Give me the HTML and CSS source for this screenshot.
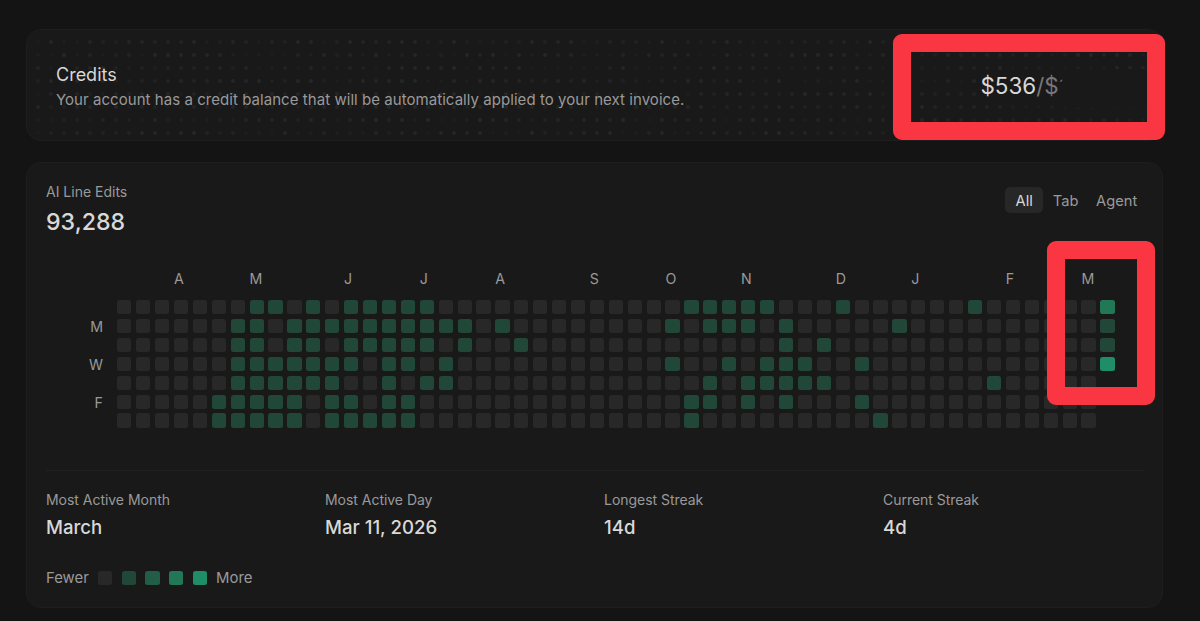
FILE: index.html
```html
<!DOCTYPE html>
<html lang="en">
<head>
  <meta charset="UTF-8">
  <title>Usage</title>
  <link rel="stylesheet" href="styles.css">
</head>
<body>
  <main class="page">

    <!-- Credits -->
    <section class="card credits">
      <div class="dots" id="dots"></div>
      <div class="credits-text">
        <h2>Credits</h2>
        <p>Your account has a credit balance that will be automatically applied to your next invoice.</p>
      </div>
      <div class="balance-cover"></div>
      <div class="balance">$536<span class="total">/$<span class="tick">´</span></span></div>
      <div class="marker marker-credits"></div>
    </section>

    <!-- Activity -->
    <section class="card activity">
      <header class="activity-header">
        <div>
          <div class="label">AI Line Edits</div>
          <div class="count">93,288</div>
        </div>
        <nav class="tabs">
          <button class="tab active">All</button>
          <button class="tab">Tab</button>
          <button class="tab">Agent</button>
        </nav>
      </header>

      <div class="months" id="months"></div>
      <div class="graph">
        <div class="days">
          <span></span><span>M</span><span></span><span>W</span><span></span><span>F</span><span></span>
        </div>
        <div class="cells" id="cells"></div>
      </div>

      <div class="stats">
        <div class="stat"><div class="label">Most Active Month</div><div class="value">March</div></div>
        <div class="stat"><div class="label">Most Active Day</div><div class="value">Mar 11, 2026</div></div>
        <div class="stat"><div class="label">Longest Streak</div><div class="value">14d</div></div>
        <div class="stat"><div class="label">Current Streak</div><div class="value">4d</div></div>
      </div>

      <div class="legend">
        <span class="fewer">Fewer</span>
        <i class="cell"></i>
        <i class="cell l1"></i>
        <i class="cell l2"></i>
        <i class="cell l3"></i>
        <i class="cell l4"></i>
        <span class="more">More</span>
      </div>
      <div class="marker marker-streak"></div>
    </section>
  </main>

  <script>
    // one string per weekday, one digit per week; a space means no day yet
    const rows = [
      '00000001101011111000000000000011111000100000010000003',
      '00000011011111111110100000000101110100000100000000001',
      '00000011011011111010010000000000000101000000000000001',
      '00000011111110110100000000000100101110010000000000004',
      '0000001111110010110000000000000101111100000000100000 ',
      '0000011111011011000000000000001101010001000000000000 ',
      '0000011111011111000000000000001000000000100000000000 '
    ];
    const months = { 3: 'A', 7: 'M', 12: 'J', 16: 'J', 20: 'A', 25: 'S', 29: 'O', 33: 'N', 38: 'D', 42: 'J', 47: 'F', 51: 'M' };

    const cells = document.getElementById('cells');
    rows.forEach(row => {
      for (const level of row) {
        const cell = document.createElement('i');
        cell.className = level === ' ' ? 'cell none' : 'cell l' + level;
        cells.appendChild(cell);
      }
    });

    const monthRow = document.getElementById('months');
    for (let week = 0; week < 53; week++) {
      const span = document.createElement('span');
      span.textContent = months[week] || '';
      monthRow.appendChild(span);
    }

    // dotted texture, fixed seed so it always looks the same
    const dots = document.getElementById('dots');
    let seed = 7;
    for (let i = 0; i < 86 * 8; i++) {
      seed = (seed * 16807) % 2147483647;
      const dot = document.createElement('i');
      dot.style.opacity = (0.2 + 0.7 * seed / 2147483647).toFixed(2);
      dots.appendChild(dot);
    }
  </script>
</body>
</html>
```
FILE: styles.css
```css
* { box-sizing: border-box; }

body {
  margin: 0;
  height: 621px;
  overflow: hidden;
  background: #141414;
  color: #d8d8d8;
  font-family: 'Inter', sans-serif;
}

.page {
  display: flex;
  flex-direction: column;
  gap: 21px;
  width: 1137px;
  margin: 29px 0 0 26px;
}

.card {
  position: relative;
  background: #191919;
  border: 1px solid #1e1e1e;
  border-radius: 15px;
}

/* Credits */
.credits {
  display: flex;
  height: 112px;
  padding: 33px 29px 0;
}

.dots {
  position: absolute;
  top: 5.5px;
  left: 4.5px;
  display: grid;
  grid-template-columns: repeat(86, 13px);
  grid-auto-rows: 13px;
  place-items: center;
}

.dots i {
  width: 4px;
  height: 4px;
  border-radius: 50%;
  background: #292929;
}

.credits-text {
  position: relative;
  width: 924.5px;
}

.credits h2 {
  margin: 0;
  font-size: 18px;
  line-height: 23px;
  font-weight: 400;
}

.credits p {
  margin: 4px 0 0;
  font-size: 15px;
  line-height: 20px;
  letter-spacing: 0.05px;
  color: #999;
}

.balance {
  position: relative;
  height: 30px;
  margin-top: 8px;
  background: #191919;
  font-size: 22.4px;
  line-height: 30px;
}

.total { color: #777; }
.tick {
  font-size: 15px;
  vertical-align: 3px;
  line-height: 1;
}

.balance-cover {
  position: absolute;
  left: 1036px;
  top: 39px;
  width: 84px;
  height: 39px;
  background: #191919;
}

/* Red highlight frames drawn over the cards */
.marker {
  position: absolute;
  border: 18px solid #fa3643;
  border-radius: 9px;
}

.marker-credits {
  left: 866px;
  top: 4px;
  width: 272px;
  height: 106px;
}

.marker-streak {
  left: 1020px;
  top: 78px;
  width: 108px;
  height: 164px;
}

/* Activity */
.activity {
  height: 446px;
  padding: 19px 17px 0 19px;
}

.activity-header {
  display: flex;
  justify-content: space-between;
  height: 86px;
}

.label {
  font-size: 14px;
  line-height: 20px;
  color: #999;
}

.count {
  margin-top: 5px;
  font-size: 23.2px;
  line-height: 30px;
  font-weight: 450;
}

.tabs {
  display: flex;
  align-items: flex-start;
  gap: 2px;
  padding-top: 5px;
}

.tab {
  height: 26px;
  padding: 1px 7.8px 0;
  border: none;
  border-radius: 5px;
  background: none;
  color: #999;
  font: 14.7px 'Inter', sans-serif;
}

.tab.active {
  padding: 1px 10.2px 0;
  background: #272727;
  color: #d8d8d8;
}

.months,
.cells {
  display: grid;
  grid-template-columns: repeat(53, 14.2px);
  column-gap: 4.73px;
}

.months {
  margin-left: 71.2px;
  height: 32px;
  font-size: 14.2px;
  line-height: 22px;
  color: #999;
}

.graph {
  display: flex;
  height: 170px;
}

.days {
  display: grid;
  grid-auto-rows: 14.2px;
  row-gap: 4.73px;
  width: 57px;
  margin-right: 14.2px;
  text-align: right;
  font-size: 14.2px;
  line-height: 15px;
  color: #999;
}

.cells {
  grid-auto-rows: 14.2px;
  row-gap: 4.73px;
}

.cell {
  width: 14.2px;
  height: 14.2px;
  border-radius: 2.5px;
  background: #282828;
}

.cell.l1 { background: #214738; }
.cell.l2 { background: #215d47; }
.cell.l3 { background: #227757; }
.cell.l4 { background: #1f8d67; }
.cell.none { visibility: hidden; }

.stats {
  display: grid;
  grid-template-columns: repeat(4, 279px);
  width: 1098px;
  padding-top: 19px;
  border-top: 1px solid #212121;
}

.stat .label { letter-spacing: -0.03px; }

.value {
  margin-top: 4px;
  font-size: 18.6px;
  line-height: 27px;
  font-weight: 450;
}

.legend {
  display: flex;
  align-items: center;
  gap: 9.4px;
  margin-top: 27px;
  font-size: 14.9px;
  line-height: 20px;
  color: #999;
}
```
